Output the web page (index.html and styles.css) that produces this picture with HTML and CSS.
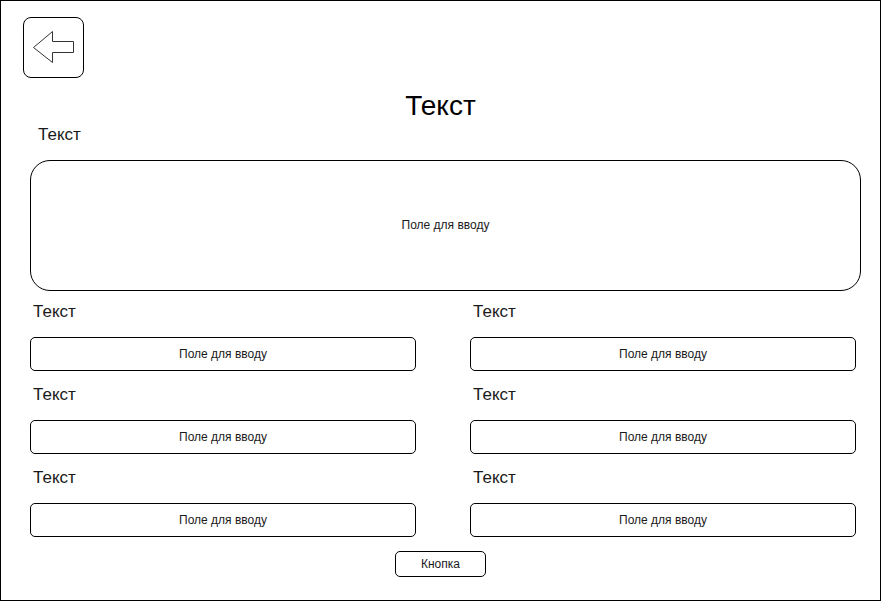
FILE: index.html
```html
<!DOCTYPE html>
<html lang="uk">
  <head>
    <meta charset="utf-8" />
    <title>Форма</title>
    <link rel="stylesheet" href="styles.css">
  </head>
  <body>
    <div class="screen">
      <div class="back-btn">
        <svg class="back-icon" width="59" height="59" viewBox="0 0 59 59">
          <polygon points="9.5,29.5 28.5,13.5 28.5,23.5 49.5,23.5 49.5,34.5 28.5,34.5 28.5,44.5" />
        </svg>
      </div>

      <h1 class="title">Текст</h1>

      <div class="label label-main">Текст</div>
      <div class="textarea">Поле для вводу</div>

      <div class="fields">
        <div class="field">
          <div class="label">Текст</div>
          <div class="input">Поле для вводу</div>
        </div>
        <div class="field">
          <div class="label">Текст</div>
          <div class="input">Поле для вводу</div>
        </div>
        <div class="field">
          <div class="label">Текст</div>
          <div class="input">Поле для вводу</div>
        </div>
        <div class="field">
          <div class="label">Текст</div>
          <div class="input">Поле для вводу</div>
        </div>
        <div class="field">
          <div class="label">Текст</div>
          <div class="input">Поле для вводу</div>
        </div>
        <div class="field">
          <div class="label">Текст</div>
          <div class="input">Поле для вводу</div>
        </div>
      </div>

      <div class="button">Кнопка</div>
    </div>
  </body>
</html>
```

FILE: styles.css
```css
html, body {
  margin: 0;
  padding: 0;
  background: #fff;
}

body {
  font-family: "Liberation Sans", Arial, sans-serif;
  color: #1a1a1a;
}

.screen {
  width: 881px;
  height: 601px;
  box-sizing: border-box;
  border: 1px solid #000;
  padding-top: 16px;
  display: flex;
  flex-direction: column;
}

/* back arrow button */
.back-btn {
  width: 61px;
  height: 61px;
  box-sizing: border-box;
  margin-left: 22px;
  border: 1px solid #000;
  border-radius: 8px;
}

.back-icon {
  display: block;
}

.back-icon polygon {
  fill: none;
  stroke: #333;
  stroke-width: 1;
}

.title {
  margin: 12px 0 0;
  font-size: 28px;
  font-weight: normal;
  line-height: 32px;
  text-align: center;
  color: #000;
}

.label {
  font-size: 17px;
  line-height: 20px;
  padding: 1px 0 0 3px;
}

.label-main {
  margin-top: 2px;
  padding-left: 37px;
}

.textarea {
  width: 831px;
  height: 131px;
  box-sizing: border-box;
  margin: 15px 0 0 29px;
  padding-bottom: 2px;
  border: 1px solid #000;
  border-radius: 20px;
  display: flex;
  align-items: center;
  justify-content: center;
  font-size: 12px;
}

.fields {
  display: grid;
  grid-template-columns: 386px 386px;
  column-gap: 54px;
  row-gap: 13px;
  margin: 10px 0 0 29px;
}

.field {
  display: flex;
  flex-direction: column;
}

.input {
  height: 34px;
  box-sizing: border-box;
  margin-top: 15px;
  border: 1px solid #000;
  border-radius: 5px;
  display: flex;
  align-items: center;
  justify-content: center;
  font-size: 12px;
}

.button {
  align-self: center;
  width: 91px;
  height: 26px;
  box-sizing: border-box;
  margin-top: 14px;
  border: 1px solid #000;
  border-radius: 5px;
  display: flex;
  align-items: center;
  justify-content: center;
  font-size: 12px;
}
```
